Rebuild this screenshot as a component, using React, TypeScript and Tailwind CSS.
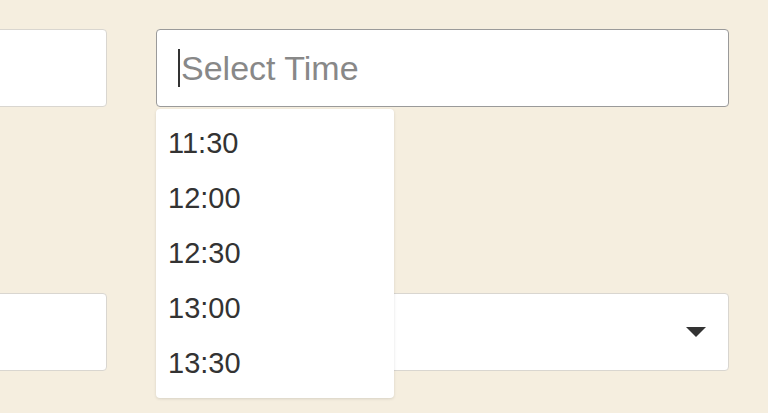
import { useState } from 'react';

const times = ['11:30', '12:00', '12:30', '13:00', '13:30'];

export default function App() {
  const [value] = useState('');

  return (
    <div
      className="relative h-[413px] w-[768px] overflow-hidden bg-[#f5eedf]"
      style={{ fontFamily: '"Liberation Sans", Arial, sans-serif' }}
    >
      <div className="flex flex-col gap-[186px] pt-[29px]">
        {/* top row */}
        <div className="flex gap-[49px]">
          <div className="ml-[-20px] h-[78px] w-[127px] rounded-[4px] border border-[#d9d6d0] bg-white" />
          <div className="relative w-[573px]">
            <div className="flex h-[78px] items-center rounded-[4px] border border-[#9a9a9a] bg-white pl-[21px]">
              <span className="mr-[1px] h-[38px] w-[2px] bg-[#333]" />
              <input
                readOnly
                value={value}
                placeholder="Select Time"
                className="w-full bg-transparent text-[34px] text-[#333] outline-none placeholder:text-[#888]"
              />
            </div>
            {/* open menu */}
            <ul className="absolute left-0 top-[80px] z-10 h-[289px] w-[238px] rounded-[4px] bg-white pt-[7px] shadow-[0_1px_3px_rgba(0,0,0,0.12)]">
              {times.map((t) => (
                <li
                  key={t}
                  className="flex h-[55px] items-center pl-[12px] text-[29px] text-[#333]"
                >
                  {t}
                </li>
              ))}
            </ul>
          </div>
        </div>

        {/* bottom row */}
        <div className="flex gap-[49px]">
          <div className="ml-[-20px] h-[78px] w-[127px] rounded-[4px] border border-[#d9d6d0] bg-white" />
          <div className="flex h-[78px] w-[573px] items-center justify-end rounded-[4px] border border-[#d9d6d0] bg-white pr-[22px]">
            <svg width="20" height="10" viewBox="0 0 20 10" aria-hidden="true">
              <path d="M0 0 H20 L10 10 Z" fill="#333" />
            </svg>
          </div>
        </div>
      </div>
    </div>
  );
}
